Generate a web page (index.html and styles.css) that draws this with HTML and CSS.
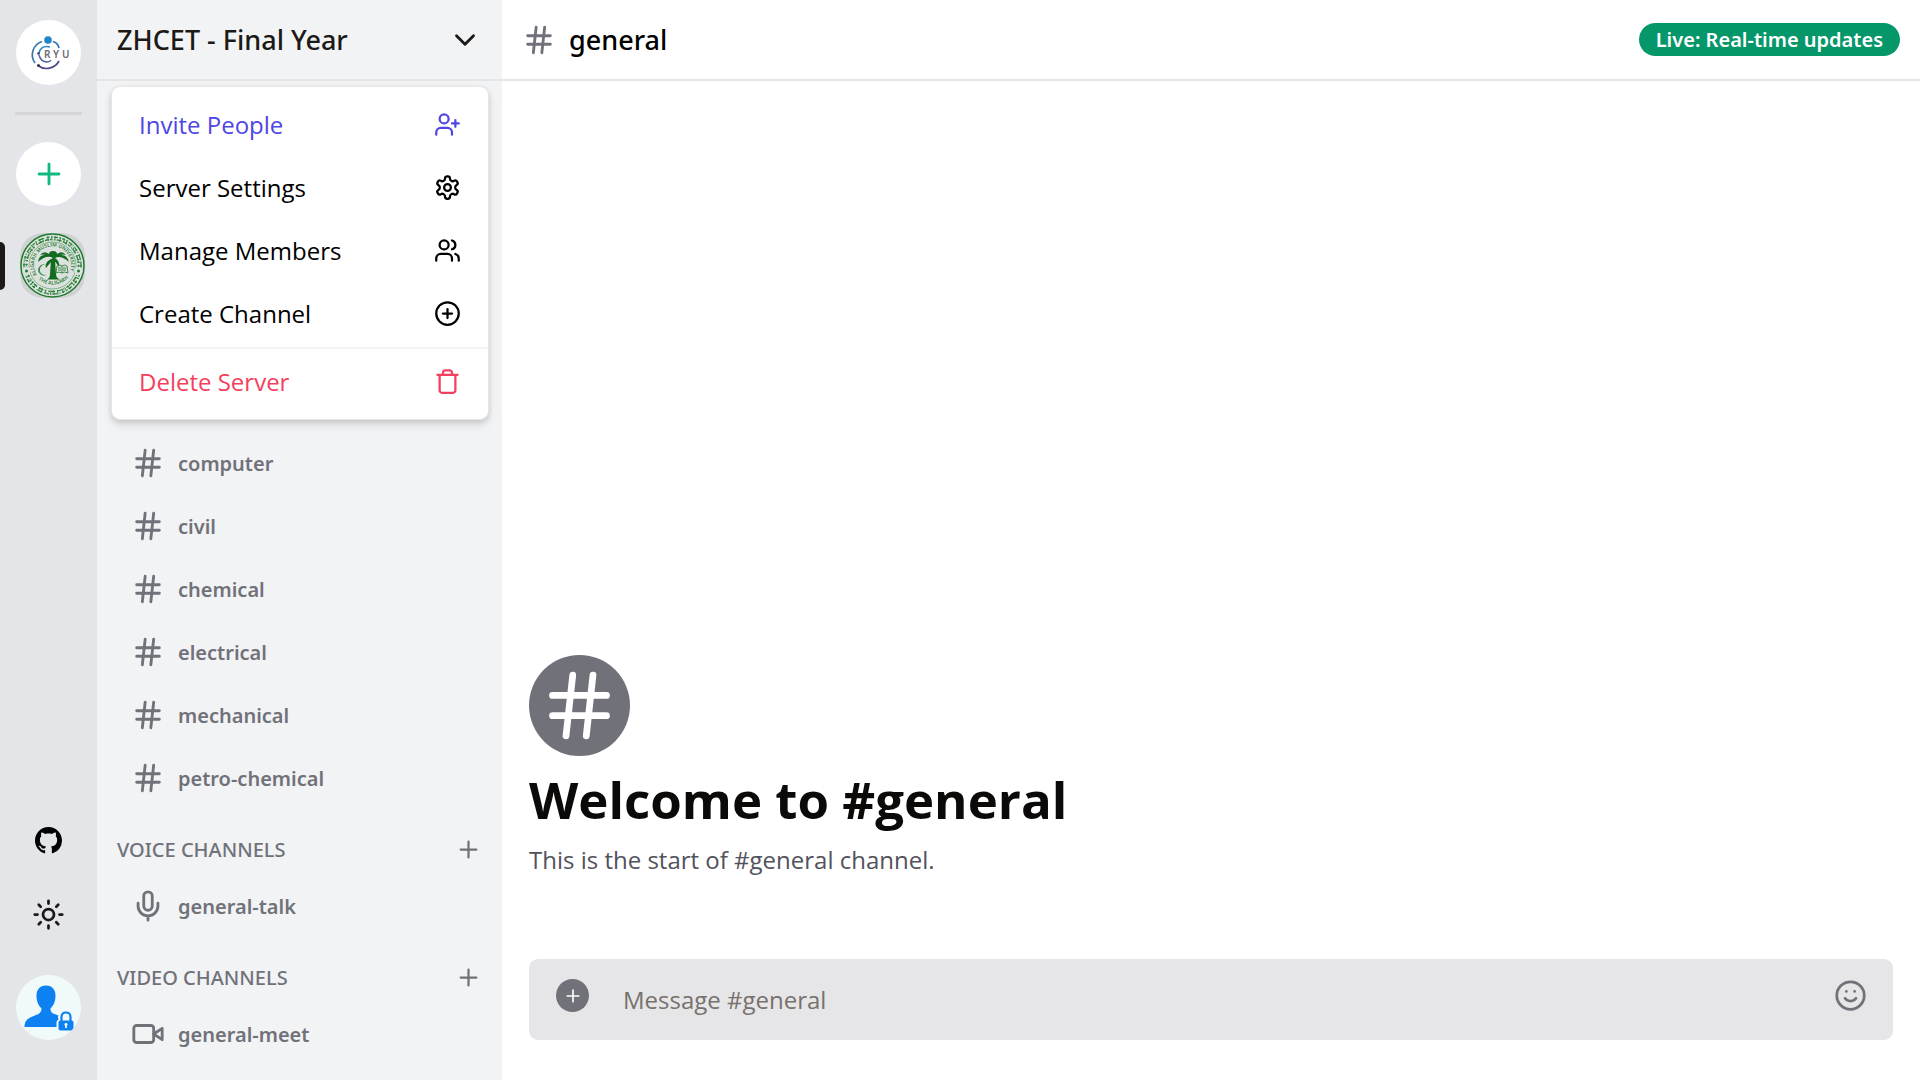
FILE: index.html
```html
<!DOCTYPE html>
<html lang="en">
<head>
<meta charset="utf-8">
<meta name="viewport" content="width=device-width, initial-scale=1">
<title>ZHCET - Final Year</title>
<link rel="stylesheet" href="styles.css">
</head>
<body>
<svg class="sprite" aria-hidden="true">
  <symbol id="hash" viewBox="0 0 24 24"><path d="M4 9h16M4 15h16M10 3 8 21M16 3l-2 18"/></symbol>
  <symbol id="plus" viewBox="0 0 24 24"><path d="M5 12h14M12 5v14"/></symbol>
</svg>
<div class="app">
  <nav class="rail" aria-label="Servers">
    <a class="rail-item logo" href="#" aria-label="Home">
      <svg viewBox="0 0 65 65" fill="none">
        <path d="M26 21.500A14 14 0 0 0 19 43" stroke="#3a78a8" stroke-width="1.700"/>
        <path d="M22 45.500A14 14 0 0 0 43 41" stroke="#4a4a86" stroke-width="1.700"/>
        <path d="M37 21.500Q42 23 43 28" stroke="#2f6fb0" stroke-width="1.700"/>
        <path d="M34 27Q25 25 23 33" stroke="#2b86c0" stroke-width="1.500"/>
        <path d="M23 35Q25 42 31 42Q34 42 35 40" stroke="#4b5fa0" stroke-width="1.500"/>
        <circle cx="32" cy="20" r="3.800" fill="#1f84c8"/>
        <circle cx="22.500" cy="33.500" r="1.300" fill="#273c75"/>
        <circle cx="22.500" cy="45.500" r="1.500" fill="#3b2f55"/>
        <text x="28 37 46" y="38" class="logo-text">RYU</text>
      </svg>
    </a>
    <hr class="rail-line">
    <button class="rail-item add" type="button" aria-label="Add a server"><svg class="icon i34"><use href="#plus"/></svg></button>
    <a class="rail-item server" href="#" aria-label="ZHCET - Final Year" aria-current="page">
      <svg viewBox="0 0 65 65" fill="none">
        <defs>
          <path id="ring-top" d="M17 42A18.500 18.500 0 1 1 48 42"/>
          <path id="ring-bottom" d="M15 43A22 22 0 0 0 50 43"/>
        </defs>
        <rect width="65" height="65" fill="#cfd1d2"/>
        <circle cx="32.500" cy="32.500" r="31.500" fill="#dde2df" stroke="#1d7a2c" stroke-width="1.500"/>
        <circle cx="32.500" cy="32.500" r="23.500" stroke="#5b9e65" stroke-width=".7"/>
        <g stroke="#2a8038">
          <circle cx="32.500" cy="32.500" r="28.500" stroke-width="1.300" stroke-dasharray="3 1.500 1 2 4 1.200 .8 2.500"/>
          <circle cx="32.500" cy="32.500" r="26" stroke-width="1.300" stroke-dasharray="4 1 2 2.500 1 1.500 5 2"/>
          <circle cx="32.500" cy="32.500" r="27.200" stroke-width="4.500" stroke-dasharray=".9 3.100 .9 2.200 .9 4.300"/>
        </g>
        <g fill="#dde2df"><circle cx="6.500" cy="38" r="4"/><circle cx="58.500" cy="38" r="4"/></g>
        <g fill="#1d7a2c"><circle cx="6.500" cy="38" r="1.500"/><circle cx="58.500" cy="38" r="1.500"/></g>
        <text class="seal-text"><textPath href="#ring-top">ALIGARH MUSLIM UNIVERSITY</textPath></text>
        <text class="seal-text"><textPath href="#ring-bottom" startOffset="5">THE ALIGARH</textPath></text>
        <g fill="#136b20">
          <path d="M31 27h4l1 14q0 4 4 5.500H27q3-1.500 3-5.500z"/>
          <path d="M33 25q-6-4-15 4q1-8 8-7q-4-1-6 0q4-5 9-1q0-3 4-3t4 3q5-4 9 1q-3-1-6 0q7-1 9 7q-8-7-14-4q5 3 4 9q-3-5-6-7q-3 3-7 8q-2-6 7-10z"/>
        </g>
        <path d="M26 32a5.500 5.500 0 1 0 1.500 9a5 5 0 1 1-1.500-9z" fill="#3c8c49"/>
        <path d="M37 33q3-2 5 0q3-2 5 0l1 7q-4-2-6 0q-3-2-6 0zM42 33v7M38 35h3M38 37h3M43 35h3M43 37h3" stroke="#2a8038" stroke-width=".9"/>
      </svg>
    </a>
    <div class="rail-bottom">
      <a class="tool" href="#" aria-label="GitHub"><svg class="github" viewBox="0 0 16 16"><path d="M8 0C3.580 0 0 3.580 0 8c0 3.540 2.290 6.530 5.470 7.590.4.070.55-.17.55-.38 0-.19-.01-.82-.01-1.490-2.010.37-2.530-.49-2.690-.94-.09-.23-.48-.94-.82-1.130-.28-.15-.68-.52-.01-.53.63-.01 1.080.58 1.230.82.72 1.210 1.870.87 2.330.66.07-.52.28-.87.51-1.070-1.780-.2-3.640-.89-3.640-3.950 0-.87.31-1.590.82-2.150-.08-.2-.36-1.020.08-2.120 0 0 .67-.21 2.200.82.64-.18 1.320-.27 2-.27s1.360.09 2 .27c1.530-1.040 2.200-.82 2.200-.82.44 1.100.16 1.920.08 2.120.51.56.82 1.270.82 2.150 0 3.070-1.870 3.750-3.650 3.950.29.25.54.73.54 1.480 0 1.070-.01 1.930-.01 2.200 0 .21.15.46.55.38A8.010 8.010 0 0 0 16 8c0-4.420-3.580-8-8-8z"/></svg></a>
      <button class="tool" type="button" aria-label="Toggle theme"><svg class="icon i33" viewBox="0 0 24 24"><circle cx="12" cy="12" r="4"/><path d="M12 2v2M12 20v2M4.930 4.930l1.410 1.410M17.660 17.660l1.410 1.410M2 12h2M20 12h2M6.340 17.660l-1.410 1.410M19.070 4.930l-1.410 1.410"/></svg></button>
      <button class="rail-item user" type="button" aria-label="Account">
        <svg viewBox="0 0 65 65" fill="#0d80f2">
          <path d="M30 10.500c6.500 0 9.500 4.500 9.500 10 0 6-2 10-5 13 0 3 1 4.500 4 5.500l4 1.500q-1 1.500 0 4-2 1-2 3v4.500H8.500c0-6 3-8.500 8-10.500 5-2 9-3 9-8-3-3-5-7-5-13 0-5.500 3-10 9.500-10z"/>
          <path d="M44.500 45.500h11q2 0 2 2v6q0 2-2 2h-11q-2 0-2-2v-6q0-2 2-2z"/>
          <path d="M45.500 46v-4q0-4.500 4.500-4.500t4.500 4.500v4" fill="none" stroke="#0d80f2" stroke-width="2.200"/>
          <path d="M50 48a1.500 1.500 0 0 1 .8 2.800v2.200h-1.600v-2.200A1.500 1.500 0 0 1 50 48z" fill="#fff"/>
        </svg>
      </button>
    </div>
  </nav>

  <aside class="sidebar">
    <button class="server-head" type="button" aria-expanded="true">ZHCET - Final Year
      <svg class="icon i34" viewBox="0 0 24 24"><path d="m6 9 6 6 6-6"/></svg>
    </button>
    <div class="menu" role="menu">
      <button class="menu-item invite" type="button" role="menuitem">Invite People
        <svg class="icon i27" viewBox="0 0 24 24"><path d="M16 21v-2a4 4 0 0 0-4-4H6a4 4 0 0 0-4 4v2"/><circle cx="9" cy="7" r="4"/><path d="M19 8v6M22 11h-6"/></svg></button>
      <button class="menu-item" type="button" role="menuitem">Server Settings
        <svg class="icon i27" viewBox="0 0 24 24"><path d="M12.220 2h-.44a2 2 0 0 0-2 2v.18a2 2 0 0 1-1 1.730l-.43.25a2 2 0 0 1-2 0l-.15-.08a2 2 0 0 0-2.730.73l-.22.38a2 2 0 0 0 .73 2.730l.15.1a2 2 0 0 1 1 1.720v.51a2 2 0 0 1-1 1.740l-.15.09a2 2 0 0 0-.73 2.730l.22.38a2 2 0 0 0 2.730.73l.15-.08a2 2 0 0 1 2 0l.43.25a2 2 0 0 1 1 1.730V20a2 2 0 0 0 2 2h.44a2 2 0 0 0 2-2v-.18a2 2 0 0 1 1-1.730l.43-.25a2 2 0 0 1 2 0l.15.08a2 2 0 0 0 2.730-.73l.22-.39a2 2 0 0 0-.73-2.730l-.15-.08a2 2 0 0 1-1-1.740v-.5a2 2 0 0 1 1-1.740l.15-.09a2 2 0 0 0 .73-2.730l-.22-.38a2 2 0 0 0-2.730-.73l-.15.08a2 2 0 0 1-2 0l-.43-.25a2 2 0 0 1-1-1.730V4a2 2 0 0 0-2-2z"/><circle cx="12" cy="12" r="3"/></svg></button>
      <button class="menu-item" type="button" role="menuitem">Manage Members
        <svg class="icon i27" viewBox="0 0 24 24"><path d="M16 21v-2a4 4 0 0 0-4-4H6a4 4 0 0 0-4 4v2"/><circle cx="9" cy="7" r="4"/><path d="M22 21v-2a4 4 0 0 0-3-3.870M16 3.130a4 4 0 0 1 0 7.750"/></svg></button>
      <button class="menu-item" type="button" role="menuitem">Create Channel
        <svg class="icon i27" viewBox="0 0 24 24"><circle cx="12" cy="12" r="10"/><path d="M8 12h8M12 8v8"/></svg></button>
      <hr class="menu-line">
      <button class="menu-item delete" type="button" role="menuitem">Delete Server
        <svg class="icon i27" viewBox="0 0 24 24"><path d="M3 6h18M19 6v14c0 1-1 2-2 2H7c-1 0-2-1-2-2V6M8 6V4c0-1 1-2 2-2h4c1 0 2 1 2 2v2"/></svg></button>
    </div>
    <div class="sections">
      <section class="section">
        <ul class="channels">
          <li><a class="channel" href="#"><svg class="icon i34"><use href="#hash"/></svg>computer</a></li>
          <li><a class="channel" href="#"><svg class="icon i34"><use href="#hash"/></svg>civil</a></li>
          <li><a class="channel" href="#"><svg class="icon i34"><use href="#hash"/></svg>chemical</a></li>
          <li><a class="channel" href="#"><svg class="icon i34"><use href="#hash"/></svg>electrical</a></li>
          <li><a class="channel" href="#"><svg class="icon i34"><use href="#hash"/></svg>mechanical</a></li>
          <li><a class="channel" href="#"><svg class="icon i34"><use href="#hash"/></svg>petro-chemical</a></li>
        </ul>
      </section>
      <section class="section">
        <div class="section-head"><h2>VOICE CHANNELS</h2><button type="button" aria-label="Create voice channel"><svg class="icon i27"><use href="#plus"/></svg></button></div>
        <ul class="channels">
          <li><a class="channel" href="#"><svg class="icon i34" viewBox="0 0 24 24"><path d="M12 2a3 3 0 0 0-3 3v7a3 3 0 0 0 6 0V5a3 3 0 0 0-3-3ZM19 10v2a7 7 0 0 1-14 0v-2M12 19v3"/></svg>general-talk</a></li>
        </ul>
      </section>
      <section class="section">
        <div class="section-head"><h2>VIDEO CHANNELS</h2><button type="button" aria-label="Create video channel"><svg class="icon i27"><use href="#plus"/></svg></button></div>
        <ul class="channels">
          <li><a class="channel" href="#"><svg class="icon i34" viewBox="0 0 24 24"><path d="m22 8-6 4 6 4V8Z"/><rect x="2" y="6" width="14" height="12" rx="2"/></svg>general-meet</a></li>
        </ul>
      </section>
    </div>
  </aside>

  <main class="main">
    <header class="chat-head">
      <svg class="icon i34 grey"><use href="#hash"/></svg>
      <h2>general</h2>
      <span class="badge">Live: Real-time updates</span>
    </header>
    <div class="chat">
      <div class="welcome-icon"><svg class="icon i81"><use href="#hash"/></svg></div>
      <h1>Welcome to #general</h1>
      <p>This is the start of #general channel.</p>
    </div>
    <form class="composer">
      <button class="attach" type="button" aria-label="Attach a file"><svg class="icon i20"><use href="#plus"/></svg></button>
      <input type="text" placeholder="Message #general" aria-label="Message #general">
      <button class="emoji" type="button" aria-label="Insert emoji"><svg class="icon i33" viewBox="0 0 24 24"><circle cx="12" cy="12" r="10"/><path d="M8 14s1.500 2 4 2 4-2 4-2M9 9h.01M15 9h.01"/></svg></button>
    </form>
  </main>
</div>
</body>
</html>
```
FILE: styles.css
```css
* { box-sizing: border-box; }
body {
  margin: 0;
  font-family: "Noto Sans", "Open Sans", sans-serif;
  color: #0c0a09;
  background: #fff;
}
h1, h2, p, ul { margin: 0; padding: 0; }
ul { list-style: none; }
a { color: inherit; text-decoration: none; }
button {
  margin: 0;
  padding: 0;
  border: 0;
  background: none;
  font: inherit;
  color: inherit;
  cursor: pointer;
}
svg { display: block; flex: none; }
.sprite { position: absolute; width: 0; height: 0; }

.icon { fill: none; stroke: currentColor; stroke-width: 2; stroke-linecap: round; stroke-linejoin: round; }
.i20 { width: 20px; height: 20px; }
.i27 { width: 27px; height: 27px; }
.i33 { width: 33px; height: 33px; }
.i34 { width: 34px; height: 34px; }
.i81 { width: 81px; height: 81px; }
.grey { color: #71717a; }

.app {
  display: grid;
  grid-template-columns: 97px 405px minmax(0, 1fr);
  min-height: 100vh;
}

/* Server rail */
.rail {
  display: flex;
  flex-direction: column;
  align-items: center;
  gap: 27px;
  padding: 20px 0 40px;
  background: #e3e5e8;
}
.rail-item {
  display: flex;
  align-items: center;
  justify-content: center;
  width: 65px;
  height: 65px;
  border-radius: 50%;
  background: #fff;
}
.rail-item > svg:not(.icon) { width: 65px; height: 65px; border-radius: inherit; }
.logo-text { font-size: 10px; font-weight: 600; fill: #6b6b74; }
.rail-line { width: 67px; height: 3px; margin: 0; border: 0; border-radius: 2px; background: #d4d4d8; }
.add { height: 64px; color: #10b981; }
.server { position: relative; align-self: flex-end; margin-right: 12px; border-radius: 22px; }
.server::before {
  content: "";
  position: absolute;
  left: -20px;
  top: 9px;
  width: 5px;
  height: 48px;
  border-radius: 0 5px 5px 0;
  background: #1c1917;
}
.seal-text { font-size: 5px; font-weight: 600; fill: #2a8038; }
.rail-bottom { display: flex; flex-direction: column; align-items: center; gap: 40px; margin-top: auto; }
.tool { display: flex; align-items: center; justify-content: center; width: 54px; height: 34px; color: #1c1917; }
.github { width: 27px; height: 27px; fill: #000; }
.user { margin-top: 4px; background: #f1fafa; }

/* Channel sidebar */
.sidebar { display: flex; flex-direction: column; background: #f2f3f5; }
.server-head {
  display: flex;
  align-items: center;
  justify-content: space-between;
  height: 81px;
  padding: 0 20px;
  border-bottom: 2px solid #e5e5e5;
  font-size: 27px;
  font-weight: 500;
  color: #1c1917;
}
.menu {
  display: flex;
  flex-direction: column;
  margin: 5px 13px 0 14px;
  padding: 6px 0;
  border: 1px solid #e7e5e4;
  border-radius: 9px;
  background: #fff;
  box-shadow: 0 5px 8px rgba(0, 0, 0, .1), 0 2px 5px rgba(0, 0, 0, .1);
}
.menu-item {
  display: flex;
  align-items: center;
  justify-content: space-between;
  height: 63px;
  padding: 0 27px;
  font-family: "Open Sans", sans-serif;
  font-size: 24px;
  line-height: 32px;
  color: #000;
}
.menu-line { width: 100%; height: 2px; margin: 2px 0 1px; border: 0; background: #f4f4f5; }
.invite { color: #4f46e5; }
.delete { color: #f43f5e; }

.sections { display: flex; flex-direction: column; gap: 14px; padding: 14px 0 16px; }
.section-head {
  display: flex;
  align-items: center;
  justify-content: space-between;
  height: 56px;
  padding: 0 20px;
  color: #71717a;
}
.section-head h2 { font-size: 20px; font-weight: 500; }
.channels { display: flex; flex-direction: column; gap: 5px; padding: 0 13px; }
.channel {
  display: flex;
  align-items: center;
  gap: 13px;
  height: 58px;
  padding: 0 21px;
  font-size: 20px;
  font-weight: 600;
  color: #71717a;
}

/* Conversation */
.main { display: flex; flex-direction: column; min-width: 0; }
.chat-head {
  display: flex;
  align-items: center;
  gap: 13px;
  height: 81px;
  padding: 0 20px;
  border-bottom: 2px solid #e5e5e5;
}
.chat-head h2 { font-size: 27px; font-weight: 500; color: #000; }
.badge {
  margin-left: auto;
  padding: 0 17px;
  border-radius: 17px;
  background: #059669;
  color: #fff;
  font-size: 20px;
  font-weight: 600;
  line-height: 33px;
}
.chat {
  display: flex;
  flex: 1;
  flex-direction: column;
  justify-content: flex-end;
  padding: 0 27px 81px;
}
.welcome-icon {
  display: flex;
  align-items: center;
  justify-content: center;
  width: 101px;
  height: 101px;
  border-radius: 50%;
  background: #71717a;
  color: #fff;
}
.chat h1,
.chat p,
.composer input { font-family: "Open Sans", sans-serif; }
.chat h1 { margin-top: 15px; font-size: 51px; font-weight: 700; line-height: 56px; }
.chat p { margin-top: 15px; font-size: 24px; line-height: 36px; color: #52525b; }
.composer {
  display: flex;
  align-items: flex-start;
  margin: 0 27px 40px;
  padding: 20px 26px 20px 27px;
  border-radius: 9px;
  background: #e6e6e8;
}
.attach {
  display: flex;
  align-items: center;
  justify-content: center;
  width: 33px;
  height: 33px;
  border-radius: 50%;
  background: #71717a;
  color: #fff;
}
.composer input {
  flex: 1;
  min-width: 0;
  height: 41px;
  margin: 0 34px;
  padding: 0;
  border: 0;
  outline: 0;
  background: none;
  font-size: 24px;
  color: #52525b;
}
.composer input::placeholder { color: #78716c; opacity: 1; }
.emoji { color: #71717a; }
```
